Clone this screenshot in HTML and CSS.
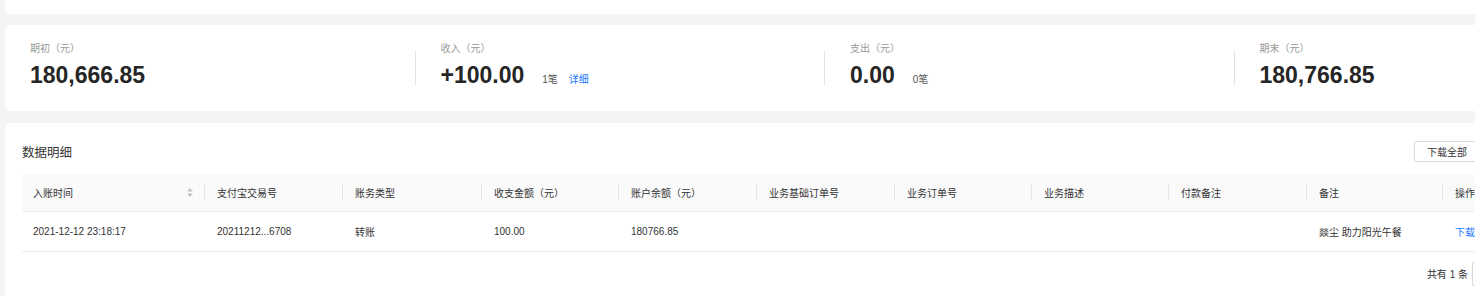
FILE: index.html
```html
<!DOCTYPE html>
<html lang="zh-CN">

<head>
  <meta charset="UTF-8">
  <meta name="viewport" content="width=device-width, initial-scale=1.0">
  <title>账户明细</title>
  <link rel="stylesheet" href="styles.css">
</head>

<body>
  <div class="page">
    <div class="card card-top"></div>

    <div class="card stats">
      <div class="stat">
        <div class="stat-body">
          <div class="stat-label">期初（元）</div>
          <div class="stat-value"><span class="amount">180,666.85</span></div>
        </div>
      </div>
      <div class="stat">
        <div class="divider"></div>
        <div class="stat-body">
          <div class="stat-label">收入（元）</div>
          <div class="stat-value">
            <span class="amount">+100.00</span>
            <span class="count">1笔</span>
            <a class="link" href="#">详细</a>
          </div>
        </div>
      </div>
      <div class="stat">
        <div class="divider"></div>
        <div class="stat-body">
          <div class="stat-label">支出（元）</div>
          <div class="stat-value">
            <span class="amount">0.00</span>
            <span class="count">0笔</span>
          </div>
        </div>
      </div>
      <div class="stat">
        <div class="divider"></div>
        <div class="stat-body">
          <div class="stat-label">期末（元）</div>
          <div class="stat-value"><span class="amount">180,766.85</span></div>
        </div>
      </div>
    </div>

    <div class="card detail">
      <div class="detail-head">
        <h2>数据明细</h2>
        <button class="btn">下载全部</button>
      </div>

      <table class="data-table">
        <colgroup>
          <col style="width: 183px">
          <col style="width: 138px">
          <col style="width: 139px">
          <col style="width: 137px">
          <col style="width: 138px">
          <col style="width: 138px">
          <col style="width: 137px">
          <col style="width: 137px">
          <col style="width: 138px">
          <col style="width: 136px">
          <col>
        </colgroup>
        <thead>
          <tr>
            <th>
              <div class="th-sort">
                入账时间
                <svg width="6" height="9" viewBox="0 0 6 9">
                  <path d="M3 0L6 3.5H0z" fill="#c4c4c4" />
                  <path d="M3 9L6 5.5H0z" fill="#c4c4c4" />
                </svg>
              </div>
            </th>
            <th>支付宝交易号</th>
            <th>账务类型</th>
            <th>收支金额（元）</th>
            <th>账户余额（元）</th>
            <th>业务基础订单号</th>
            <th>业务订单号</th>
            <th>业务描述</th>
            <th>付款备注</th>
            <th>备注</th>
            <th>操作</th>
          </tr>
        </thead>
        <tbody>
          <tr>
            <td>2021-12-12 23:18:17</td>
            <td>20211212...6708</td>
            <td>转账</td>
            <td>100.00</td>
            <td>180766.85</td>
            <td></td>
            <td></td>
            <td></td>
            <td></td>
            <td>燚尘 助力阳光午餐</td>
            <td><a class="link-plain" href="#">下载</a></td>
          </tr>
        </tbody>
      </table>

      <div class="pager">
        <span class="pager-total">共有 1 条</span>
        <span class="pager-item">
          <svg width="8" height="8" viewBox="0 0 8 8">
            <path d="M5 1L2 4l3 3" fill="none" stroke="#999" stroke-width="1.2" />
          </svg>
        </span>
      </div>
    </div>
  </div>
</body>

</html>
```

FILE: styles.css
```css
* {
  box-sizing: border-box;
}

body {
  margin: 0;
  background: #f4f4f4;
  color: #333;
  font-family: "Liberation Sans", "Noto Sans CJK SC", sans-serif;
  overflow: hidden;
}

.page {
  width: 1648px;
  padding: 0 5px;
}

.card {
  background: #fff;
  border-radius: 6px;
}

.card-top {
  height: 14px;
  border-radius: 0 0 6px 6px;
  margin-bottom: 11px;
}

/* summary numbers */
.stats {
  display: grid;
  grid-template-columns: repeat(4, 1fr);
  padding: 17px 0 21px;
  margin-bottom: 12px;
}

.stat {
  display: flex;
}

.divider {
  width: 1px;
  height: 34px;
  margin-top: 9px;
  background: #e2e2e2;
}

.stat-body {
  padding-left: 25px;
}

.stat-label {
  font-size: 10px;
  line-height: 14px;
  color: #999;
  margin-bottom: 4px;
}

.stat-value {
  display: flex;
  align-items: baseline;
}

.amount {
  font-size: 23px;
  line-height: 30px;
  font-weight: 700;
  color: #262626;
}

.count {
  font-size: 10px;
  color: #555;
  margin-left: 18px;
}

.link {
  font-size: 10px;
  color: #1677ff;
  text-decoration: none;
  margin-left: 11px;
}

/* detail table */
.detail {
  padding: 18px 17px 20px;
}

.detail-head {
  width: 1458px;
  height: 21px;
  display: flex;
  justify-content: space-between;
  align-items: center;
  margin-bottom: 12px;
}

.detail-head h2 {
  margin: 0;
  font-size: 12.5px;
  font-weight: 400;
  color: #333;
}

.btn {
  height: 21px;
  padding: 0 12px;
  border: 1px solid #d9d9d9;
  border-radius: 2px;
  background: #fff;
  color: #333;
  font-family: inherit;
  font-size: 10px;
}

.data-table {
  width: 1604px;
  table-layout: fixed;
  border-collapse: collapse;
  font-size: 10px;
}

.data-table th {
  position: relative;
  height: 37px;
  padding: 0 12px;
  background: #fafafa;
  border-bottom: 1px solid #ececec;
  text-align: left;
  font-weight: 400;
  color: #333;
  white-space: nowrap;
}

.data-table th:not(:last-child)::after {
  content: "";
  position: absolute;
  right: 0;
  top: 10px;
  width: 1px;
  height: 17px;
  background: #e6e6e6;
}

.data-table th:first-child,
.data-table td:first-child {
  padding-left: 11px;
}

.th-sort {
  display: flex;
  justify-content: space-between;
  align-items: center;
}

.data-table td {
  height: 40px;
  padding: 0 12px;
  border-bottom: 1px solid #ececec;
  color: #333;
  white-space: nowrap;
}

.link-plain {
  color: #1677ff;
  text-decoration: none;
}

.pager {
  width: 1474px;
  display: flex;
  justify-content: flex-end;
  align-items: center;
  gap: 4px;
  margin-top: 10px;
  font-size: 10px;
}

.pager-item {
  width: 24px;
  height: 24px;
  display: flex;
  align-items: center;
  justify-content: center;
  border: 1px solid #d9d9d9;
  border-radius: 2px;
}
```
